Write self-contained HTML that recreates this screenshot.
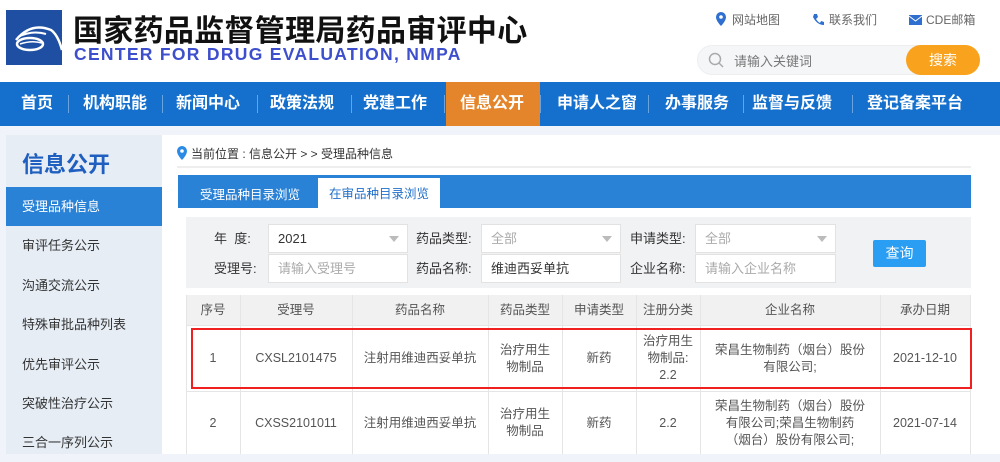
<!DOCTYPE html>
<html><head><meta charset="utf-8"><style>
*{margin:0;padding:0;box-sizing:border-box}
body{width:1000px;height:454px;overflow:hidden;background:#f0f4fa;font-family:"Liberation Sans","Noto Sans CJK SC",sans-serif;position:relative}
.a{position:absolute}
.hdr{left:0;top:0;width:1000px;height:82px;background:#fff}
.navbg{left:0;top:82px;width:1000px;height:44px;background:#1470cc}
.nav span{position:absolute;top:0;height:44px;line-height:44px;color:#fff;font-weight:bold;font-size:16px;transform:translateX(-50%);white-space:nowrap}
.sep{position:absolute;top:95px;width:1px;height:18px;background:#6aa4e0}
.side{left:6px;top:135px;width:156px;height:319px;background:#e6edf5}
.side div{position:absolute;left:0;width:156px;height:39px;line-height:39px;padding-left:16px;font-size:13px;color:#333}
.cell{position:absolute;text-align:center;font-size:12.5px;color:#555;display:flex;align-items:center;justify-content:center;line-height:17px}
.inp{position:absolute;height:29px;background:#fff;border:1px solid #e2e2e2;font-size:13px;line-height:27px;padding-left:9px;color:#aaa}
.lbl{position:absolute;font-size:13px;color:#333;line-height:29px}
.arr{position:absolute;right:8px;top:11px;border-left:5px solid transparent;border-right:5px solid transparent;border-top:6px solid #bbb}
</style></head><body>
<div class="a hdr"></div>
<svg class="a" style="left:6px;top:10px" width="56" height="55"><rect width="56" height="55" fill="#1e4fa3"/><path d="M10 30 Q25 12 45 20 Q52 25 56 40" stroke="#fff" stroke-width="2.5" fill="none"/><ellipse cx="24" cy="34" rx="13" ry="6" stroke="#fff" stroke-width="2.5" fill="none"/><path d="M14 34 Q26 30 36 33" stroke="#fff" stroke-width="1.5" fill="none"/><path d="M12 27 Q26 20 40 24" stroke="#fff" stroke-width="2" fill="none"/></svg>
<div class="a" style="left:73px;top:6px;font-size:30px;font-weight:bold;color:#111;letter-spacing:0.3px;white-space:nowrap">国家药品监督管理局药品审评中心</div>
<div class="a" style="left:74px;top:44px;font-size:17.5px;font-weight:bold;color:#3d4fcc;letter-spacing:1.3px;white-space:nowrap">CENTER FOR DRUG EVALUATION, NMPA</div>
<svg class="a" style="left:716px;top:12px" width="10" height="14"><path d="M5 0a5 5 0 0 1 5 5c0 4-5 9-5 9s-5-5-5-9a5 5 0 0 1 5-5z" fill="#2f6fd0"/><circle cx="5" cy="5" r="1.8" fill="#fff"/></svg>
<div class="a" style="left:732px;top:11px;font-size:12px;color:#666">网站地图</div>
<svg class="a" style="left:812px;top:13px" width="13" height="13"><path d="M2 1 L5 1 L6 4 L4 6 Q6 9 8 10 L9 8 L12 9 L12 12 Q5 12 1 4Z" fill="#2f6fd0"/></svg>
<div class="a" style="left:829px;top:11px;font-size:12px;color:#666">联系我们</div>
<svg class="a" style="left:909px;top:15px" width="13" height="10"><rect width="13" height="10" fill="#2f6fd0"/><path d="M0 1 L6.5 6 L13 1" stroke="#fff" fill="none"/></svg>
<div class="a" style="left:926px;top:11px;font-size:12px;color:#666">CDE邮箱</div>
<div class="a" style="left:697px;top:45px;width:283px;height:30px;border-radius:15px;background:#f5f6f8;border:1px solid #eee"></div>
<svg class="a" style="left:708px;top:52px" width="16" height="16"><circle cx="7" cy="7" r="5.5" stroke="#aaa" stroke-width="1.5" fill="none"/><path d="M11 11 L15 15" stroke="#aaa" stroke-width="1.5"/></svg>
<div class="a" style="left:734px;top:51px;font-size:13px;color:#777">请输入关键词</div>
<div class="a" style="left:906px;top:45px;width:74px;height:30px;border-radius:15px;background:#f9a21e;color:#fff;font-size:14px;text-align:center;line-height:30px">搜索</div>

<div class="a navbg"></div>
<div class="a" style="left:446px;top:82px;width:94px;height:44px;background:#e5852b"></div>
<div class="a nav" style="left:0;top:82px;width:1000px;height:44px">
<span style="left:37px">首页</span><span style="left:115px">机构职能</span><span style="left:208px">新闻中心</span><span style="left:302px">政策法规</span><span style="left:395px">党建工作</span><span style="left:492px">信息公开</span><span style="left:597px">申请人之窗</span><span style="left:697px">办事服务</span><span style="left:792px">监督与反馈</span><span style="left:915px">登记备案平台</span></div>
<div class="sep" style="left:68px"></div><div class="sep" style="left:162px"></div><div class="sep" style="left:257px"></div><div class="sep" style="left:351px"></div><div class="sep" style="left:444px"></div><div class="sep" style="left:540px"></div><div class="sep" style="left:648px"></div><div class="sep" style="left:743px"></div><div class="sep" style="left:852px"></div>

<div class="a side">
<div style="top:10px;height:40px;line-height:40px;font-size:22px;font-weight:bold;color:#1f5fc0">信息公开</div>
<div style="top:52px;background:#2a82d6;color:#fff">受理品种信息</div>
<div style="top:91px">审评任务公示</div>
<div style="top:131px">沟通交流公示</div>
<div style="top:170px">特殊审批品种列表</div>
<div style="top:210px">优先审评公示</div>
<div style="top:249px">突破性治疗公示</div>
<div style="top:288px">三合一序列公示</div>
</div>

<div class="a" style="left:162px;top:135px;width:838px;height:319px;background:#fff"></div>
<svg class="a" style="left:177px;top:146px" width="10" height="14"><path d="M5 0a5 5 0 0 1 5 5c0 4-5 9-5 9s-5-5-5-9a5 5 0 0 1 5-5z" fill="#2a8ae6"/><circle cx="5" cy="5" r="1.8" fill="#fff"/></svg>
<div class="a" style="left:191px;top:145px;font-size:12px;color:#333">当前位置 : 信息公开 &gt; &gt; 受理品种信息</div>
<div class="a" style="left:177px;top:166px;width:794px;height:2px;background:#eee"></div>
<div class="a" style="left:178px;top:175px;width:793px;height:33px;background:#2a82d6"></div>
<div class="a" style="left:200px;top:184px;font-size:12.5px;color:#fff">受理品种目录浏览</div>
<div class="a" style="left:318px;top:178px;width:122px;height:30px;background:#fff;color:#1f6fc9;font-size:12.5px;text-align:center;line-height:32px">在审品种目录浏览</div>
<div class="a" style="left:186px;top:217px;width:785px;height:71px;background:#f1f2f4"></div>
<div class="lbl" style="left:214px;top:224px">年&nbsp;&nbsp;度:</div>
<div class="inp" style="left:268px;top:224px;width:140px;color:#333">2021<div class="arr"></div></div>
<div class="lbl" style="left:416px;top:224px">药品类型:</div>
<div class="inp" style="left:481px;top:224px;width:140px">全部<div class="arr"></div></div>
<div class="lbl" style="left:630px;top:224px">申请类型:</div>
<div class="inp" style="left:695px;top:224px;width:141px">全部<div class="arr"></div></div>
<div class="lbl" style="left:214px;top:254px">受理号:</div>
<div class="inp" style="left:268px;top:254px;width:140px">请输入受理号</div>
<div class="lbl" style="left:416px;top:254px">药品名称:</div>
<div class="inp" style="left:481px;top:254px;width:140px;color:#333">维迪西妥单抗</div>
<div class="lbl" style="left:630px;top:254px">企业名称:</div>
<div class="inp" style="left:695px;top:254px;width:141px">请输入企业名称</div>
<div class="a" style="left:873px;top:240px;width:53px;height:27px;background:#2a9ef2;color:#fff;font-size:14px;text-align:center;line-height:27px;border-radius:2px">查询</div>

<div class="a" style="left:186px;top:295px;width:785px;height:30px;background:#f1f1f1"></div>
<div class="a" style="left:186px;top:391px;width:785px;height:1px;background:#e5e5e5"></div>
<div class="a" style="left:186px;top:325px;width:785px;height:1px;background:#e5e5e5"></div>
<div class="a" style="left:240px;top:295px;width:1px;height:159px;background:#e5e5e5"></div>
<div class="a" style="left:352px;top:295px;width:1px;height:159px;background:#e5e5e5"></div>
<div class="a" style="left:488px;top:295px;width:1px;height:159px;background:#e5e5e5"></div>
<div class="a" style="left:562px;top:295px;width:1px;height:159px;background:#e5e5e5"></div>
<div class="a" style="left:636px;top:295px;width:1px;height:159px;background:#e5e5e5"></div>
<div class="a" style="left:700px;top:295px;width:1px;height:159px;background:#e5e5e5"></div>
<div class="a" style="left:880px;top:295px;width:1px;height:159px;background:#e5e5e5"></div>
<div class="a" style="left:186px;top:295px;width:1px;height:159px;background:#e5e5e5"></div>
<div class="a" style="left:970px;top:295px;width:1px;height:159px;background:#e5e5e5"></div>

<div class="cell" style="left:186px;top:295px;width:54px;height:30px">序号</div>
<div class="cell" style="left:240px;top:295px;width:112px;height:30px">受理号</div>
<div class="cell" style="left:352px;top:295px;width:136px;height:30px">药品名称</div>
<div class="cell" style="left:488px;top:295px;width:74px;height:30px">药品类型</div>
<div class="cell" style="left:562px;top:295px;width:74px;height:30px">申请类型</div>
<div class="cell" style="left:636px;top:295px;width:64px;height:30px">注册分类</div>
<div class="cell" style="left:700px;top:295px;width:180px;height:30px">企业名称</div>
<div class="cell" style="left:880px;top:295px;width:90px;height:30px">承办日期</div>

<div class="cell" style="left:186px;top:326px;width:54px;height:65px">1</div>
<div class="cell" style="left:240px;top:326px;width:112px;height:65px">CXSL2101475</div>
<div class="cell" style="left:352px;top:326px;width:136px;height:65px">注射用维迪西妥单抗</div>
<div class="cell" style="left:488px;top:326px;width:74px;height:65px">治疗用生<br>物制品</div>
<div class="cell" style="left:562px;top:326px;width:74px;height:65px">新药</div>
<div class="cell" style="left:636px;top:326px;width:64px;height:65px">治疗用生<br>物制品:<br>2.2</div>
<div class="cell" style="left:700px;top:326px;width:180px;height:65px">荣昌生物制药（烟台）股份<br>有限公司;</div>
<div class="cell" style="left:880px;top:326px;width:90px;height:65px">2021-12-10</div>

<div class="cell" style="left:186px;top:392px;width:54px;height:62px">2</div>
<div class="cell" style="left:240px;top:392px;width:112px;height:62px">CXSS2101011</div>
<div class="cell" style="left:352px;top:392px;width:136px;height:62px">注射用维迪西妥单抗</div>
<div class="cell" style="left:488px;top:392px;width:74px;height:62px">治疗用生<br>物制品</div>
<div class="cell" style="left:562px;top:392px;width:74px;height:62px">新药</div>
<div class="cell" style="left:636px;top:392px;width:64px;height:62px">2.2</div>
<div class="cell" style="left:700px;top:392px;width:180px;height:62px">荣昌生物制药（烟台）股份<br>有限公司;荣昌生物制药<br>（烟台）股份有限公司;</div>
<div class="cell" style="left:880px;top:392px;width:90px;height:62px">2021-07-14</div>

<div class="a" style="left:191px;top:328px;width:781px;height:61px;border:2px solid #f02020"></div>
</body></html>
